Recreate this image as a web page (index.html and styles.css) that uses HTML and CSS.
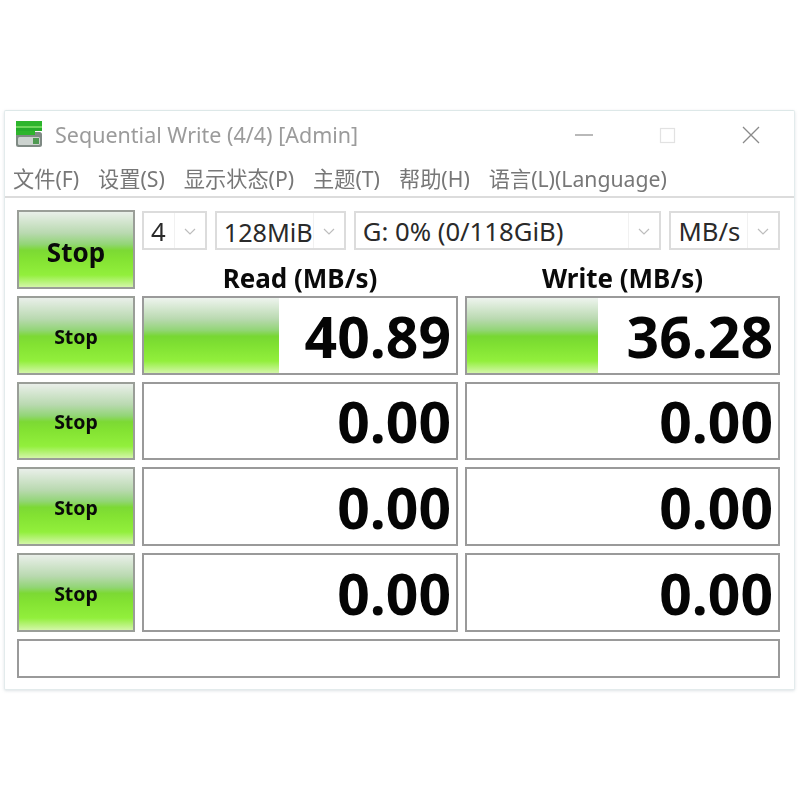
FILE: index.html
```html
<!DOCTYPE html>
<html lang="zh">
<head>
<meta charset="utf-8">
<title>Sequential Write (4/4) [Admin]</title>
<link rel="stylesheet" href="styles.css">
</head>
<body>
<div class="window">
  <div class="titlebar">
    <svg class="app-icon" width="28" height="28" viewBox="0 0 28 28">
      <rect x="1" y="12" width="26" height="15" rx="2.5" fill="#7f8a84"/>
      <rect x="3" y="17" width="22" height="8" rx="1.5" fill="#ccd3cf"/>
      <rect x="18" y="18" width="6" height="6" fill="#4f9a52"/>
      <rect x="1" y="1" width="26" height="5" fill="#2db52c"/>
      <rect x="1" y="6" width="26" height="2" fill="#6ed65c"/>
      <rect x="1" y="8" width="26" height="3" fill="#25ad29"/>
      <rect x="1" y="11" width="19" height="4" fill="#2db52c"/>
    </svg>
    <span class="title">Sequential Write (4/4) [Admin]</span>
    <div class="controls">
      <svg class="ctl ctl-min" width="20" height="20" viewBox="0 0 20 20"><path d="M1 10h18" stroke="#8a8a8a" stroke-width="1.2"/></svg>
      <svg class="ctl ctl-max" width="18" height="18" viewBox="0 0 18 18"><rect x="1.5" y="2.5" width="14" height="14" fill="none" stroke="#e2e2e2" stroke-width="1.2"/></svg>
      <svg class="ctl ctl-close" width="20" height="20" viewBox="0 0 20 20"><path d="M2 2l16 16M18 2L2 18" stroke="#8a8a8a" stroke-width="1.3"/></svg>
    </div>
  </div>
  <nav class="menu">
    <span>文件(F)</span><span>设置(S)</span><span>显示状态(P)</span><span>主题(T)</span><span>帮助(H)</span><span>语言(L)(Language)</span>
  </nav>
  <main class="panel">
    <button class="btn btn-main">Stop</button>
    <div class="top">
      <div class="selects">
        <div class="select sel-count"><span class="val">4</span><svg class="chev" width="12" height="7" viewBox="0 0 12 7"><path d="M1 1l5 5 5-5" fill="none" stroke="#bdbdbd" stroke-width="1.2"/></svg></div>
        <div class="select sel-size"><span class="val">128MiB</span><svg class="chev" width="12" height="7" viewBox="0 0 12 7"><path d="M1 1l5 5 5-5" fill="none" stroke="#bdbdbd" stroke-width="1.2"/></svg></div>
        <div class="select sel-drive"><span class="val">G: 0% (0/118GiB)</span><svg class="chev" width="12" height="7" viewBox="0 0 12 7"><path d="M1 1l5 5 5-5" fill="none" stroke="#bdbdbd" stroke-width="1.2"/></svg></div>
        <div class="select sel-unit"><span class="val">MB/s</span><svg class="chev" width="12" height="7" viewBox="0 0 12 7"><path d="M1 1l5 5 5-5" fill="none" stroke="#bdbdbd" stroke-width="1.2"/></svg></div>
      </div>
      <div class="heads"><span>Read (MB/s)</span><span>Write (MB/s)</span></div>
    </div>

    <button class="btn">Stop</button>
    <div class="cell"><div class="bar" style="width:43.4%"></div><span class="num">40.89</span></div>
    <div class="cell"><div class="bar" style="width:42.2%"></div><span class="num">36.28</span></div>

    <button class="btn">Stop</button>
    <div class="cell"><span class="num">0.00</span></div>
    <div class="cell"><span class="num">0.00</span></div>

    <button class="btn">Stop</button>
    <div class="cell"><span class="num">0.00</span></div>
    <div class="cell"><span class="num">0.00</span></div>

    <button class="btn">Stop</button>
    <div class="cell"><span class="num">0.00</span></div>
    <div class="cell"><span class="num">0.00</span></div>

    <div class="status"></div>
  </main>
</div>
</body>
</html>
```
FILE: styles.css
```css
* { box-sizing: border-box; }
html, body { margin: 0; padding: 0; background: #fff; }
body { width: 800px; height: 800px; padding: 110px 5px 0 4px; overflow: hidden; }

.window {
  width: 791px;
  height: 580px;
  background: #fff;
  border: 1px solid #e3ebec;
  border-top-color: #dde8e8;
  border-radius: 2px;
  box-shadow: 0 1px 3px rgba(120, 140, 150, .25);
  font-family: "Noto Sans", "Noto Sans CJK SC", sans-serif;
  filter: blur(.45px);
}

.titlebar { display: flex; align-items: center; height: 47px; padding: 0 33px 0 10px; }
.app-icon { flex: none; margin-top: -1px; }
.title { margin-left: 12px; font-size: 21.5px; color: #9b9b9b; }
.controls { margin-left: auto; display: flex; align-items: center; }
.ctl-min { margin-right: 65px; }
.ctl-max { margin-right: 64px; }

.menu {
  display: flex;
  gap: 19px;
  height: 40px;
  padding: 0 0 0 8px;
  align-items: center;
  font-size: 21.2px;
  color: #777;
  border-bottom: 2px solid #dcdcdc;
}

.panel {
  display: grid;
  grid-template-columns: 118px 316px 315px;
  grid-auto-rows: 78.75px;
  gap: 7px;
  padding: 12px 0 0 12px;
}

.btn {
  border: 2px solid #9a9e98;
  padding: 2px 0 0;
  background: linear-gradient(#e9efe9 0%, #b9d9b0 28%, #92d576 43%, #7cd934 51%, #83e232 62%, #92ef3c 84%, #d3f6a8 100%);
  font-family: inherit;
  font-weight: 700;
  font-size: 19.5px;
  color: #0a0a0a;
}
.btn-main { font-size: 26px; padding-top: 6px; }

.top { grid-column: 2 / 4; display: flex; flex-direction: column; }
.selects { display: flex; gap: 8px; height: 39px; margin-top: 1px; }
.select {
  display: flex;
  align-items: center;
  border: 2px solid #dcdcdc;
  background: #fff;
  font-size: 25.7px;
  color: #2a2a2a;
}
.val {
  flex: 1;
  min-width: 0;
  align-self: stretch;
  display: flex;
  align-items: center;
  padding: 2px 0 0 7px;
  white-space: nowrap;
  border-right: 1px solid #f1f1f1;
}
.chev { flex: none; margin: 1px 9px 0 9px; }
.sel-count { width: 65px; }
.sel-size { width: 131px; font-size: 25.2px; }
.sel-drive { width: 309px; }
.sel-unit { width: 111px; }

.heads { display: grid; grid-template-columns: 316px 315px; gap: 7px; margin-top: 12px; }
.heads span { text-align: center; font-size: 26px; font-weight: 700; line-height: 32px; color: #0a0a0a; white-space: nowrap; }

.cell {
  position: relative;
  border: 2px solid #9a9a9a;
  background: #fff;
  display: flex;
  align-items: center;
  justify-content: flex-end;
  padding: 2px 5px 0 0;
}
.bar {
  position: absolute;
  left: 0; top: 0; bottom: 0;
  background: linear-gradient(#eef4ee 0%, #b9d9b0 28%, #92d576 43%, #77d733 51%, #7fe032 62%, #92ef3c 84%, #d3f6a8 100%);
}
.num { position: relative; font-size: 57px; font-weight: 700; color: #050505; line-height: 1; }

.status {
  grid-column: 1 / 4;
  border: 2px solid #9a9a9a;
  height: 39px;
  background: #fff;
}
```
